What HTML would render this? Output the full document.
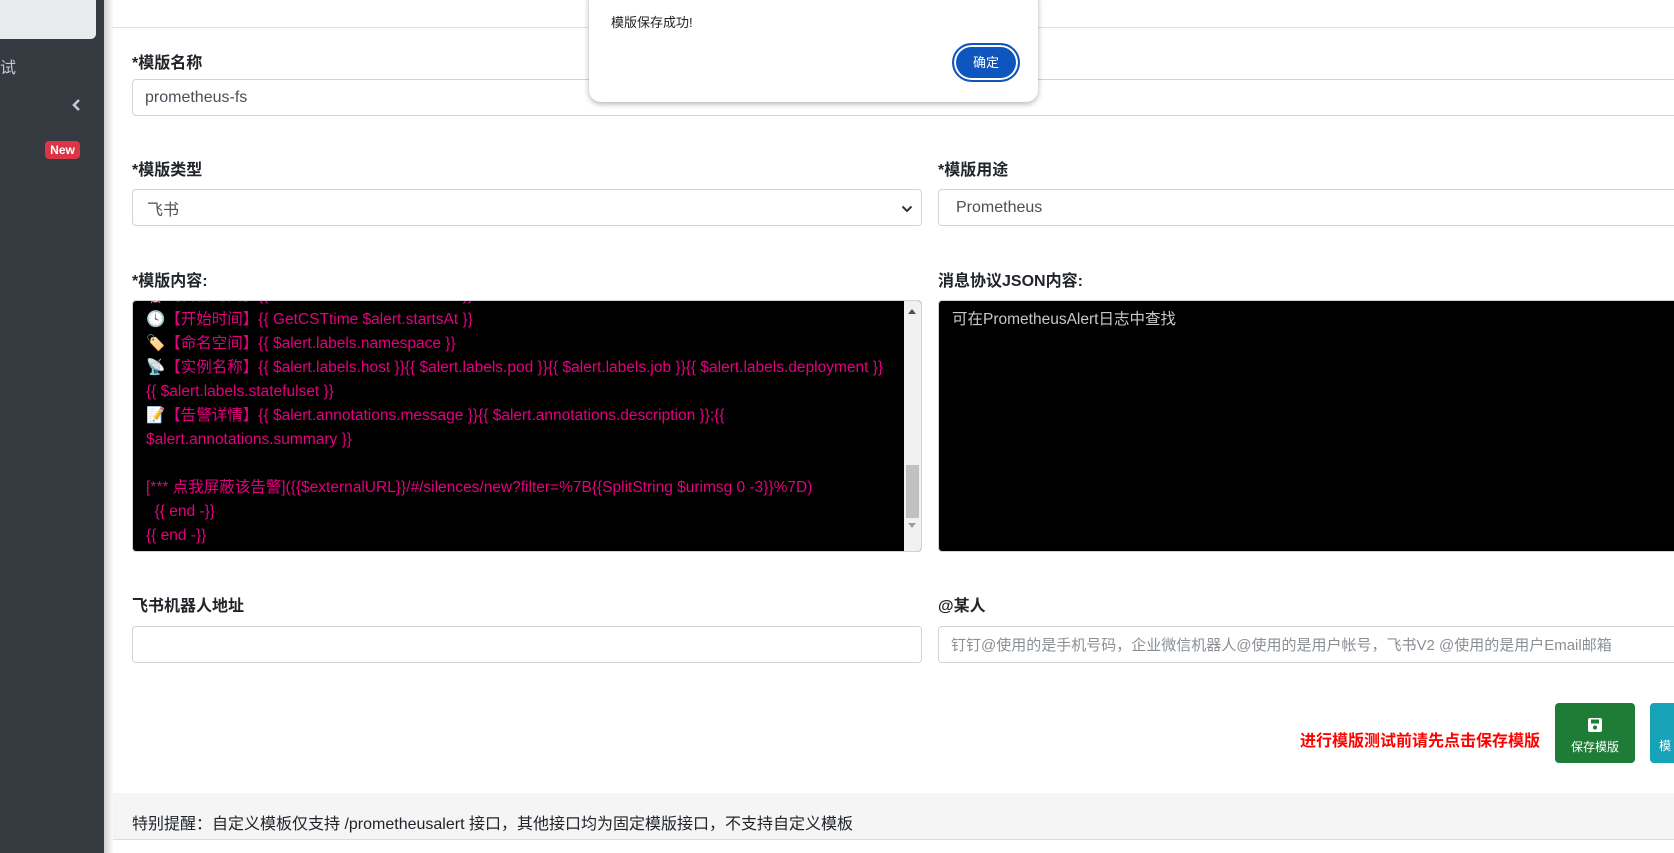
<!DOCTYPE html>
<html><head><meta charset="utf-8">
<style>
*{box-sizing:border-box;margin:0;padding:0}
body{width:1674px;height:853px;overflow:hidden;background:#fff;font-family:"Liberation Sans","Noto Sans CJK SC",sans-serif;position:relative;color:#212529}
.a{position:absolute}
.lbl{position:absolute;font-weight:bold;font-size:16px;color:#212529}
.inp{position:absolute;border:1px solid #ced4da;border-radius:4px;background:#fff;font-size:16px;color:#495057;padding-left:12px;display:flex;align-items:center}
.ta{position:absolute;background:#000;border:1px solid #ced4da;border-radius:4px;overflow:hidden}
.ln{position:absolute;left:13px;font-size:15.5px;color:#e4007f;white-space:nowrap;line-height:24px}
</style></head><body>
<div class="a" style="left:0;top:0;width:104px;height:853px;background:#343a40"></div>
<div class="a" style="left:0;top:0;width:96px;height:39px;background:#e9ecec;border-radius:0 0 5px 0"></div>
<div class="a" style="left:0;top:54px;font-size:16px;color:#c2c7d0">试</div>
<svg class="a" style="left:71px;top:98px" width="10" height="14" viewBox="0 0 10 14"><path d="M8 2 L3 7 L8 12" stroke="#c2c7d0" stroke-width="2.6" fill="none"/></svg>
<div class="a" style="left:45px;top:141px;width:35px;height:18px;background:#dc3545;border-radius:4px;color:#fff;font-size:12px;font-weight:bold;text-align:center;line-height:18px">New</div>
<div class="a" style="left:104px;top:0;width:10px;height:853px;background:linear-gradient(90deg,#d0d0d0,#fff)"></div>
<div class="a" style="left:112px;top:27px;width:1562px;height:1px;background:#dee2e6"></div>

<div class="lbl" style="left:132px;top:49px">*模版名称</div>
<div class="inp" style="left:132px;top:79px;width:1560px;height:37px">prometheus-fs</div>

<div class="lbl" style="left:132px;top:156px">*模版类型</div>
<div class="inp" style="left:132px;top:189px;width:790px;height:37px;padding-left:14px">飞书
<svg class="a" style="right:8px;top:14px" width="12" height="10" viewBox="0 0 12 10"><path d="M1.5 2.5 L6 7 L10.5 2.5" stroke="#333" stroke-width="2" fill="none"/></svg></div>
<div class="lbl" style="left:938px;top:156px">*模版用途</div>
<div class="inp" style="left:938px;top:189px;width:760px;height:37px;padding-left:17px">Prometheus</div>

<div class="lbl" style="left:132px;top:267px">*模版内容:</div>
<div class="ta" style="left:132px;top:300px;width:790px;height:252px">
<div class="ln" style="top:-17px">⏰【告警时间】{{ GetCSTtime $alert.startsAt }}</div>
<div class="ln" style="top:7px">🕓【开始时间】{{ GetCSTtime $alert.startsAt }}</div>
<div class="ln" style="top:31px">🏷️【命名空间】{{ $alert.labels.namespace }}</div>
<div class="ln" style="top:55px">📡【实例名称】{{ $alert.labels.host }}{{ $alert.labels.pod }}{{ $alert.labels.job }}{{ $alert.labels.deployment }}</div>
<div class="ln" style="top:79px">{{ $alert.labels.statefulset }}</div>
<div class="ln" style="top:103px">📝【告警详情】{{ $alert.annotations.message }}{{ $alert.annotations.description }};{{</div>
<div class="ln" style="top:127px">$alert.annotations.summary }}</div>
<div class="ln" style="top:175px">[*** 点我屏蔽该告警]({{$externalURL}}/#/silences/new?filter=%7B{{SplitString $urimsg 0 -3}}%7D)</div>
<div class="ln" style="top:199px">&nbsp;&nbsp;{{ end -}}</div>
<div class="ln" style="top:223px">{{ end -}}</div>
<div class="a" style="right:0;top:0;width:17px;height:252px;background:#f1f1f1"></div>
<div class="a" style="right:5px;top:8px;width:0;height:0;border:4px solid transparent;border-bottom:5px solid #505050;border-top:0"></div>
<div class="a" style="right:5px;top:222px;width:0;height:0;border:4px solid transparent;border-top:5px solid #a0a0a0;border-bottom:0"></div>
<div class="a" style="right:2px;top:164px;width:13px;height:53px;background:#c1c1c1"></div>
</div>
<div class="lbl" style="left:938px;top:267px">消息协议JSON内容:</div>
<div class="ta" style="left:938px;top:300px;width:760px;height:252px">
<div class="ln" style="top:7px;color:#c8c8c8">可在PrometheusAlert日志中查找</div></div>

<div class="lbl" style="left:132px;top:592px">飞书机器人地址</div>
<div class="inp" style="left:132px;top:626px;width:790px;height:37px"></div>
<div class="lbl" style="left:938px;top:592px">@某人</div>
<div class="inp" style="left:938px;top:626px;width:760px;height:37px;color:#8a8f94;font-size:15px">钉钉@使用的是手机号码，企业微信机器人@使用的是用户帐号，飞书V2 @使用的是用户Email邮箱</div>

<div class="a" style="left:1300px;top:727px;font-size:16px;font-weight:bold;color:#f00">进行模版测试前请先点击保存模版</div>
<div class="a" style="left:1555px;top:703px;width:80px;height:60px;background:#1f7c36;border-radius:4px;color:#fff;font-size:12px;text-align:center">
<svg style="margin-top:14px" width="16" height="16" viewBox="0 0 16 16"><rect x="1" y="1" width="14" height="14" rx="2" fill="#fff"/><rect x="4" y="2.5" width="8" height="4" fill="#1f7c36"/><circle cx="8" cy="10.5" r="2" fill="#1f7c36"/></svg>
<div style="margin-top:2px">保存模版</div></div>
<div class="a" style="left:1650px;top:703px;width:80px;height:60px;background:#17a2b8;border-radius:4px;color:#fff;font-size:12px;padding:34px 0 0 9px">模</div>

<div class="a" style="left:113px;top:793px;width:1561px;height:47px;background:#f5f5f5;border-bottom:1px solid #ddd;font-size:16px;padding:17px 0 0 19px">特别提醒：自定义模板仅支持 /prometheusalert 接口，其他接口均为固定模版接口，不支持自定义模板</div>

<div class="a" style="left:589px;top:-12px;width:449px;height:114px;background:#fff;border-radius:12px;box-shadow:0 2px 6px rgba(0,0,0,.3)">
<div class="a" style="left:22px;top:24px;font-size:13px;color:#222">模版保存成功!</div>
<div class="a" style="left:363px;top:55px;width:68px;height:39px;border-radius:20px;background:#0f55be;border:2px solid #0f55be;box-shadow:inset 0 0 0 2px #fff;color:#fff;font-size:13px;text-align:center;line-height:35px">确定</div>
</div>
</body></html>
